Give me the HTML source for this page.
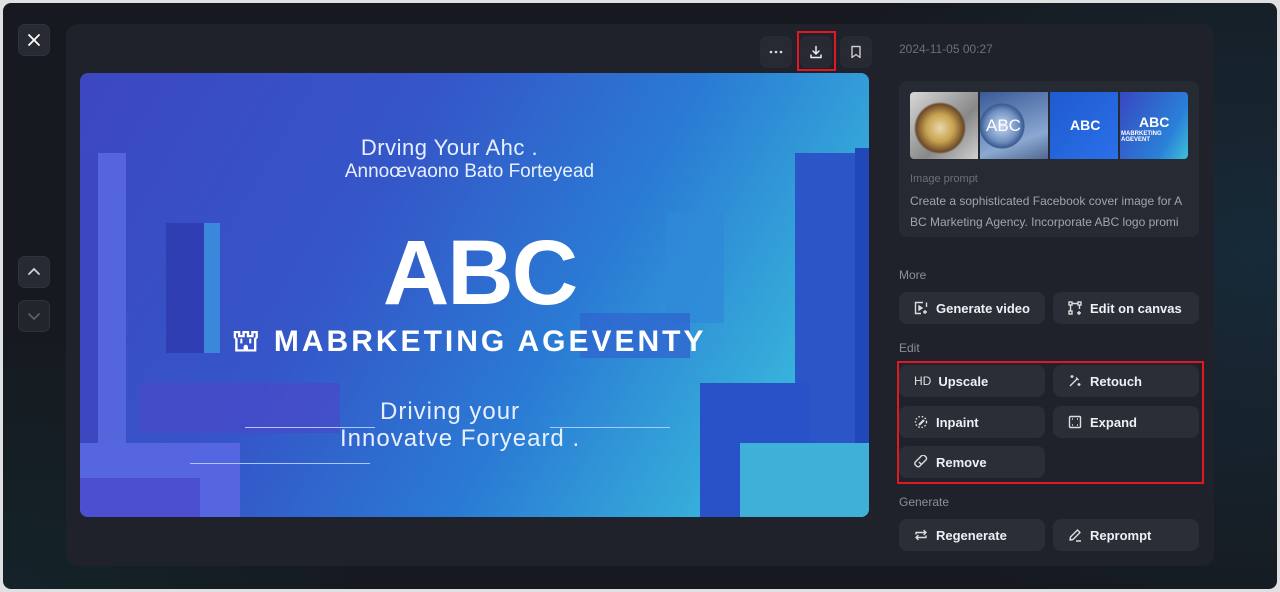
<!DOCTYPE html>
<html><head><meta charset="utf-8"><style>
*{margin:0;padding:0;box-sizing:border-box}
body{width:1280px;height:592px;background:#dfe0e2;font-family:"Liberation Sans",sans-serif;overflow:hidden;position:relative}
.frame{position:absolute;left:3px;top:3px;width:1274px;height:586px;border-radius:8px;background:radial-gradient(ellipse 500px 400px at 1250px 250px,#172a38,transparent),radial-gradient(ellipse 400px 300px at 0px 600px,#13242a,transparent),#16191f}
.panel{position:absolute;left:66px;top:24px;width:1148px;height:542px;border-radius:12px;background:#1f222a}
.ib{position:absolute;width:32px;height:32px;border-radius:7px;background:#272a33;border:1px solid #2f333c;display:flex;align-items:center;justify-content:center}
.img{position:absolute;left:80px;top:73px;width:789px;height:444px;border-radius:8px;overflow:hidden;background:linear-gradient(120deg,#3d47c0 0%,#3556c8 35%,#2a7ad4 60%,#37b2da 85%,#5fe0d8 100%)}
.b{position:absolute;background:#2a2e37;border-radius:8px;width:146px;height:32px;color:#eef0f3;font-size:13px;font-weight:bold;display:flex;align-items:center;padding-left:15px}
.b svg{margin-right:8px}
.lbl{position:absolute;left:899px;color:#8a8f98;font-size:12px}
.blk{position:absolute}
.t{position:absolute;color:#e8f0ff;white-space:nowrap}
</style></head><body>
<div class="frame"></div>
<div class="panel"></div>
<div class="ib" style="left:18px;top:24px"><svg width="14" height="14" viewBox="0 0 14 14"><path d="M2 2L12 12M12 2L2 12" stroke="#fff" stroke-width="1.8" stroke-linecap="round"/></svg></div>
<div class="ib" style="left:18px;top:256px"><svg width="14" height="10" viewBox="0 0 14 10"><path d="M2 7L7 2L12 7" stroke="#cfd2d8" stroke-width="1.8" fill="none" stroke-linecap="round"/></svg></div>
<div class="ib" style="left:18px;top:300px;background:#22252c"><svg width="14" height="10" viewBox="0 0 14 10"><path d="M2 3L7 8L12 3" stroke="#5a5f68" stroke-width="1.8" fill="none" stroke-linecap="round"/></svg></div>
<div class="ib" style="left:760px;top:36px;border:none"><svg width="14" height="4"><circle cx="2" cy="2" r="1.3" fill="#ddd"/><circle cx="7" cy="2" r="1.3" fill="#ddd"/><circle cx="12" cy="2" r="1.3" fill="#ddd"/></svg></div>
<div class="ib" style="left:800px;top:36px;border:none"><svg width="14" height="14" viewBox="0 0 14 14"><path d="M7 1.5V8.5M4 6L7 9L10 6M2 10V12.5H12V10" stroke="#eee" stroke-width="1.5" fill="none" stroke-linecap="round" stroke-linejoin="round"/></svg></div>
<div style="position:absolute;left:797px;top:31px;width:39px;height:40px;border:2px solid #e3171f"></div>
<div class="ib" style="left:840px;top:36px;border:none"><svg width="12" height="14" viewBox="0 0 12 14"><path d="M2 1.5H10V12.5L6 9.5L2 12.5Z" stroke="#ccc" stroke-width="1.4" fill="none" stroke-linejoin="round"/></svg></div>

<div class="img">
 <div class="blk" style="left:0;top:80px;width:18px;height:330px;background:#3c47c0"></div>
 <div class="blk" style="left:18px;top:80px;width:28px;height:330px;background:#5566dc"></div>
 <div class="blk" style="left:86px;top:150px;width:38px;height:130px;background:#2f3eb2"></div>
 <div class="blk" style="left:124px;top:150px;width:16px;height:130px;background:#3a88dc"></div>
 <div class="blk" style="left:60px;top:310px;width:200px;height:50px;background:#4a48c8;opacity:.7"></div>
 <div class="blk" style="left:0;top:370px;width:160px;height:74px;background:#5566e0"></div>
 <div class="blk" style="left:0;top:405px;width:120px;height:39px;background:#4a50d0"></div>
 <div class="blk" style="left:715px;top:80px;width:60px;height:310px;background:#2c56c8"></div>
 <div class="blk" style="left:775px;top:75px;width:14px;height:330px;background:#2048b8"></div>
 <div class="blk" style="left:586px;top:140px;width:58px;height:110px;background:#2f8ad8;opacity:.8"></div>
 <div class="blk" style="left:500px;top:240px;width:110px;height:45px;background:#2f66d0;opacity:.8"></div>
 <div class="blk" style="left:620px;top:310px;width:110px;height:134px;background:#2a52c8"></div>
 <div class="blk" style="left:660px;top:370px;width:129px;height:74px;background:#3fb0d8"></div>
 <div class="t" style="left:0;width:100%;top:62px;text-align:center;font-size:22px;letter-spacing:0.5px;padding-right:50px">Drving Your Ahc .</div>
 <div class="t" style="left:0;width:100%;top:88px;text-align:center;font-size:19px;padding-right:10px">Annoœvaono Bato Forteyead</div>
 <div class="t" style="left:0;width:100%;top:150px;text-align:center;color:#fff;font-size:92px;font-weight:bold;letter-spacing:-2px;padding-left:10px;line-height:100px">ABC</div>
 <div class="t" style="left:152px;top:252px;color:#fff;font-size:30px;font-weight:bold;letter-spacing:3px">⛫ MABRKETING AGEVENTY</div>
 <div class="t" style="left:300px;top:325px;font-size:24px;letter-spacing:1px">Driving your</div>
 <div class="t" style="left:260px;top:352px;font-size:24px;letter-spacing:1px">Innovatve Foryeard .</div>
 <div class="blk" style="left:165px;top:354px;width:130px;height:1px;background:#a8c8ff"></div>
 <div class="blk" style="left:470px;top:354px;width:120px;height:1px;background:#a8c8ff"></div>
 <div class="blk" style="left:110px;top:390px;width:180px;height:1px;background:#a8c8ff"></div>
</div>

<div style="position:absolute;left:899px;top:42px;color:#6b7079;font-size:12px">2024-11-05 00:27</div>
<div style="position:absolute;left:899px;top:81px;width:300px;height:156px;background:#262a33;border-radius:8px;overflow:hidden">
 <div style="position:absolute;left:11px;top:11px;width:68px;height:67px;border-radius:4px 0 0 4px;background:radial-gradient(circle at 30px 36px,#e8d9a8 0,#c8a050 14px,#6b4a2a 24px,transparent 26px),linear-gradient(135deg,#d8d8d8,#888 60%,#d0d0d0)"></div>
 <div style="position:absolute;left:81px;top:11px;width:68px;height:67px;background:radial-gradient(circle at 22px 34px,#c8d8f0 0,#7090c0 16px,#3a5a90 22px,transparent 23px),linear-gradient(160deg,#3a5a98,#8aa8d0 70%,#506890)"><span style="position:absolute;left:6px;top:24px;color:#fff;font-size:17px">ABC</span></div>
 <div style="position:absolute;left:151px;top:11px;width:68px;height:67px;background:linear-gradient(135deg,#1f5ad0,#2a70e8)"><span style="position:absolute;left:20px;top:25px;color:#fff;font-size:14px;font-weight:bold">ABC</span></div>
 <div style="position:absolute;left:221px;top:11px;width:68px;height:67px;border-radius:0 4px 4px 0;background:linear-gradient(120deg,#3848c0,#2a80d8 70%,#40c0d8)"><span style="position:absolute;left:19px;top:22px;color:#fff;font-size:14px;font-weight:bold">ABC</span><span style="position:absolute;left:1px;top:39px;color:#fff;font-size:6px;font-weight:bold">MABRKETING AGEVENT</span></div>
 <div style="position:absolute;left:11px;top:92px;color:#6b7079;font-size:11px">Image prompt</div>
 <div style="position:absolute;left:11px;top:110px;width:285px;color:#a0a5ae;font-size:12px;line-height:21px">Create a sophisticated Facebook cover image for A<br>BC Marketing Agency. Incorporate ABC logo promi<br>nently at the center and surrounded by...</div>
</div>

<div class="lbl" style="top:268px">More</div>
<div class="b" style="left:899px;top:292px"><svg width="14" height="14" viewBox="0 0 14 14" fill="none" stroke="#ddd" stroke-width="1.4"><path d="M9 1.5H1.5V12.5H7M12.5 1.5V6"/><path d="M5 5V9L8 7Z" fill="#ddd"/><path d="M11 9V13M9 11H13"/></svg>Generate video</div>
<div class="b" style="left:1053px;top:292px"><svg width="14" height="14" viewBox="0 0 14 14" fill="none" stroke="#ddd" stroke-width="1.4"><rect x="1" y="1" width="3" height="3"/><rect x="10" y="1" width="3" height="3"/><rect x="1" y="10" width="3" height="3"/><path d="M4 2.5H10M2.5 4V10M11.5 4V8M11 10V14M9 12H13"/></svg>Edit on canvas</div>
<div class="lbl" style="top:341px">Edit</div>
<div class="b" style="left:899px;top:365px"><span style="font-weight:normal;color:#ddd;margin-right:7px;font-size:12px">HD</span>Upscale</div>
<div class="b" style="left:1053px;top:365px"><svg width="14" height="14" viewBox="0 0 14 14" fill="none" stroke="#ddd" stroke-width="1.4"><path d="M2 12L9 5M8 3.5L10.5 6M4 1V4M2.5 2.5H5.5M11 9V12M9.5 10.5H12.5"/></svg>Retouch</div>
<div class="b" style="left:899px;top:406px"><svg width="14" height="14" viewBox="0 0 14 14" fill="none" stroke="#ddd" stroke-width="1.4"><circle cx="7" cy="7" r="5.5" stroke-dasharray="1.5 1.8"/><path d="M5 10L10 5" stroke-width="2.2"/></svg>Inpaint</div>
<div class="b" style="left:1053px;top:406px"><svg width="14" height="14" viewBox="0 0 14 14" fill="none" stroke="#ddd" stroke-width="1.4"><rect x="1.5" y="1.5" width="11" height="11" rx="1"/><path d="M4 4H5M9 4H10M4 10H5M9 10H10"/></svg>Expand</div>
<div class="b" style="left:899px;top:446px"><svg width="14" height="14" viewBox="0 0 14 14" fill="none" stroke="#ddd" stroke-width="1.4"><rect x="3" y="0" width="6" height="13" rx="2" transform="rotate(45 7 7)"/><path d="M5 7L7 9"/></svg>Remove</div>
<div style="position:absolute;left:897px;top:361px;width:307px;height:123px;border:2px solid #e3171f"></div>
<div class="lbl" style="top:495px">Generate</div>
<div class="b" style="left:899px;top:519px"><svg width="14" height="14" viewBox="0 0 14 14" fill="none" stroke="#ddd" stroke-width="1.4" stroke-linecap="round" stroke-linejoin="round"><path d="M2 6V4.5H12M10 2.5L12 4.5L10 6.5M12 8V9.5H2M4 11.5L2 9.5L4 7.5"/></svg>Regenerate</div>
<div class="b" style="left:1053px;top:519px"><svg width="14" height="14" viewBox="0 0 14 14" fill="none" stroke="#ddd" stroke-width="1.4" stroke-linejoin="round"><path d="M2 12L2.5 9L9.5 2L12 4.5L5 11.5Z M8 13H13"/></svg>Reprompt</div>
</body></html>
